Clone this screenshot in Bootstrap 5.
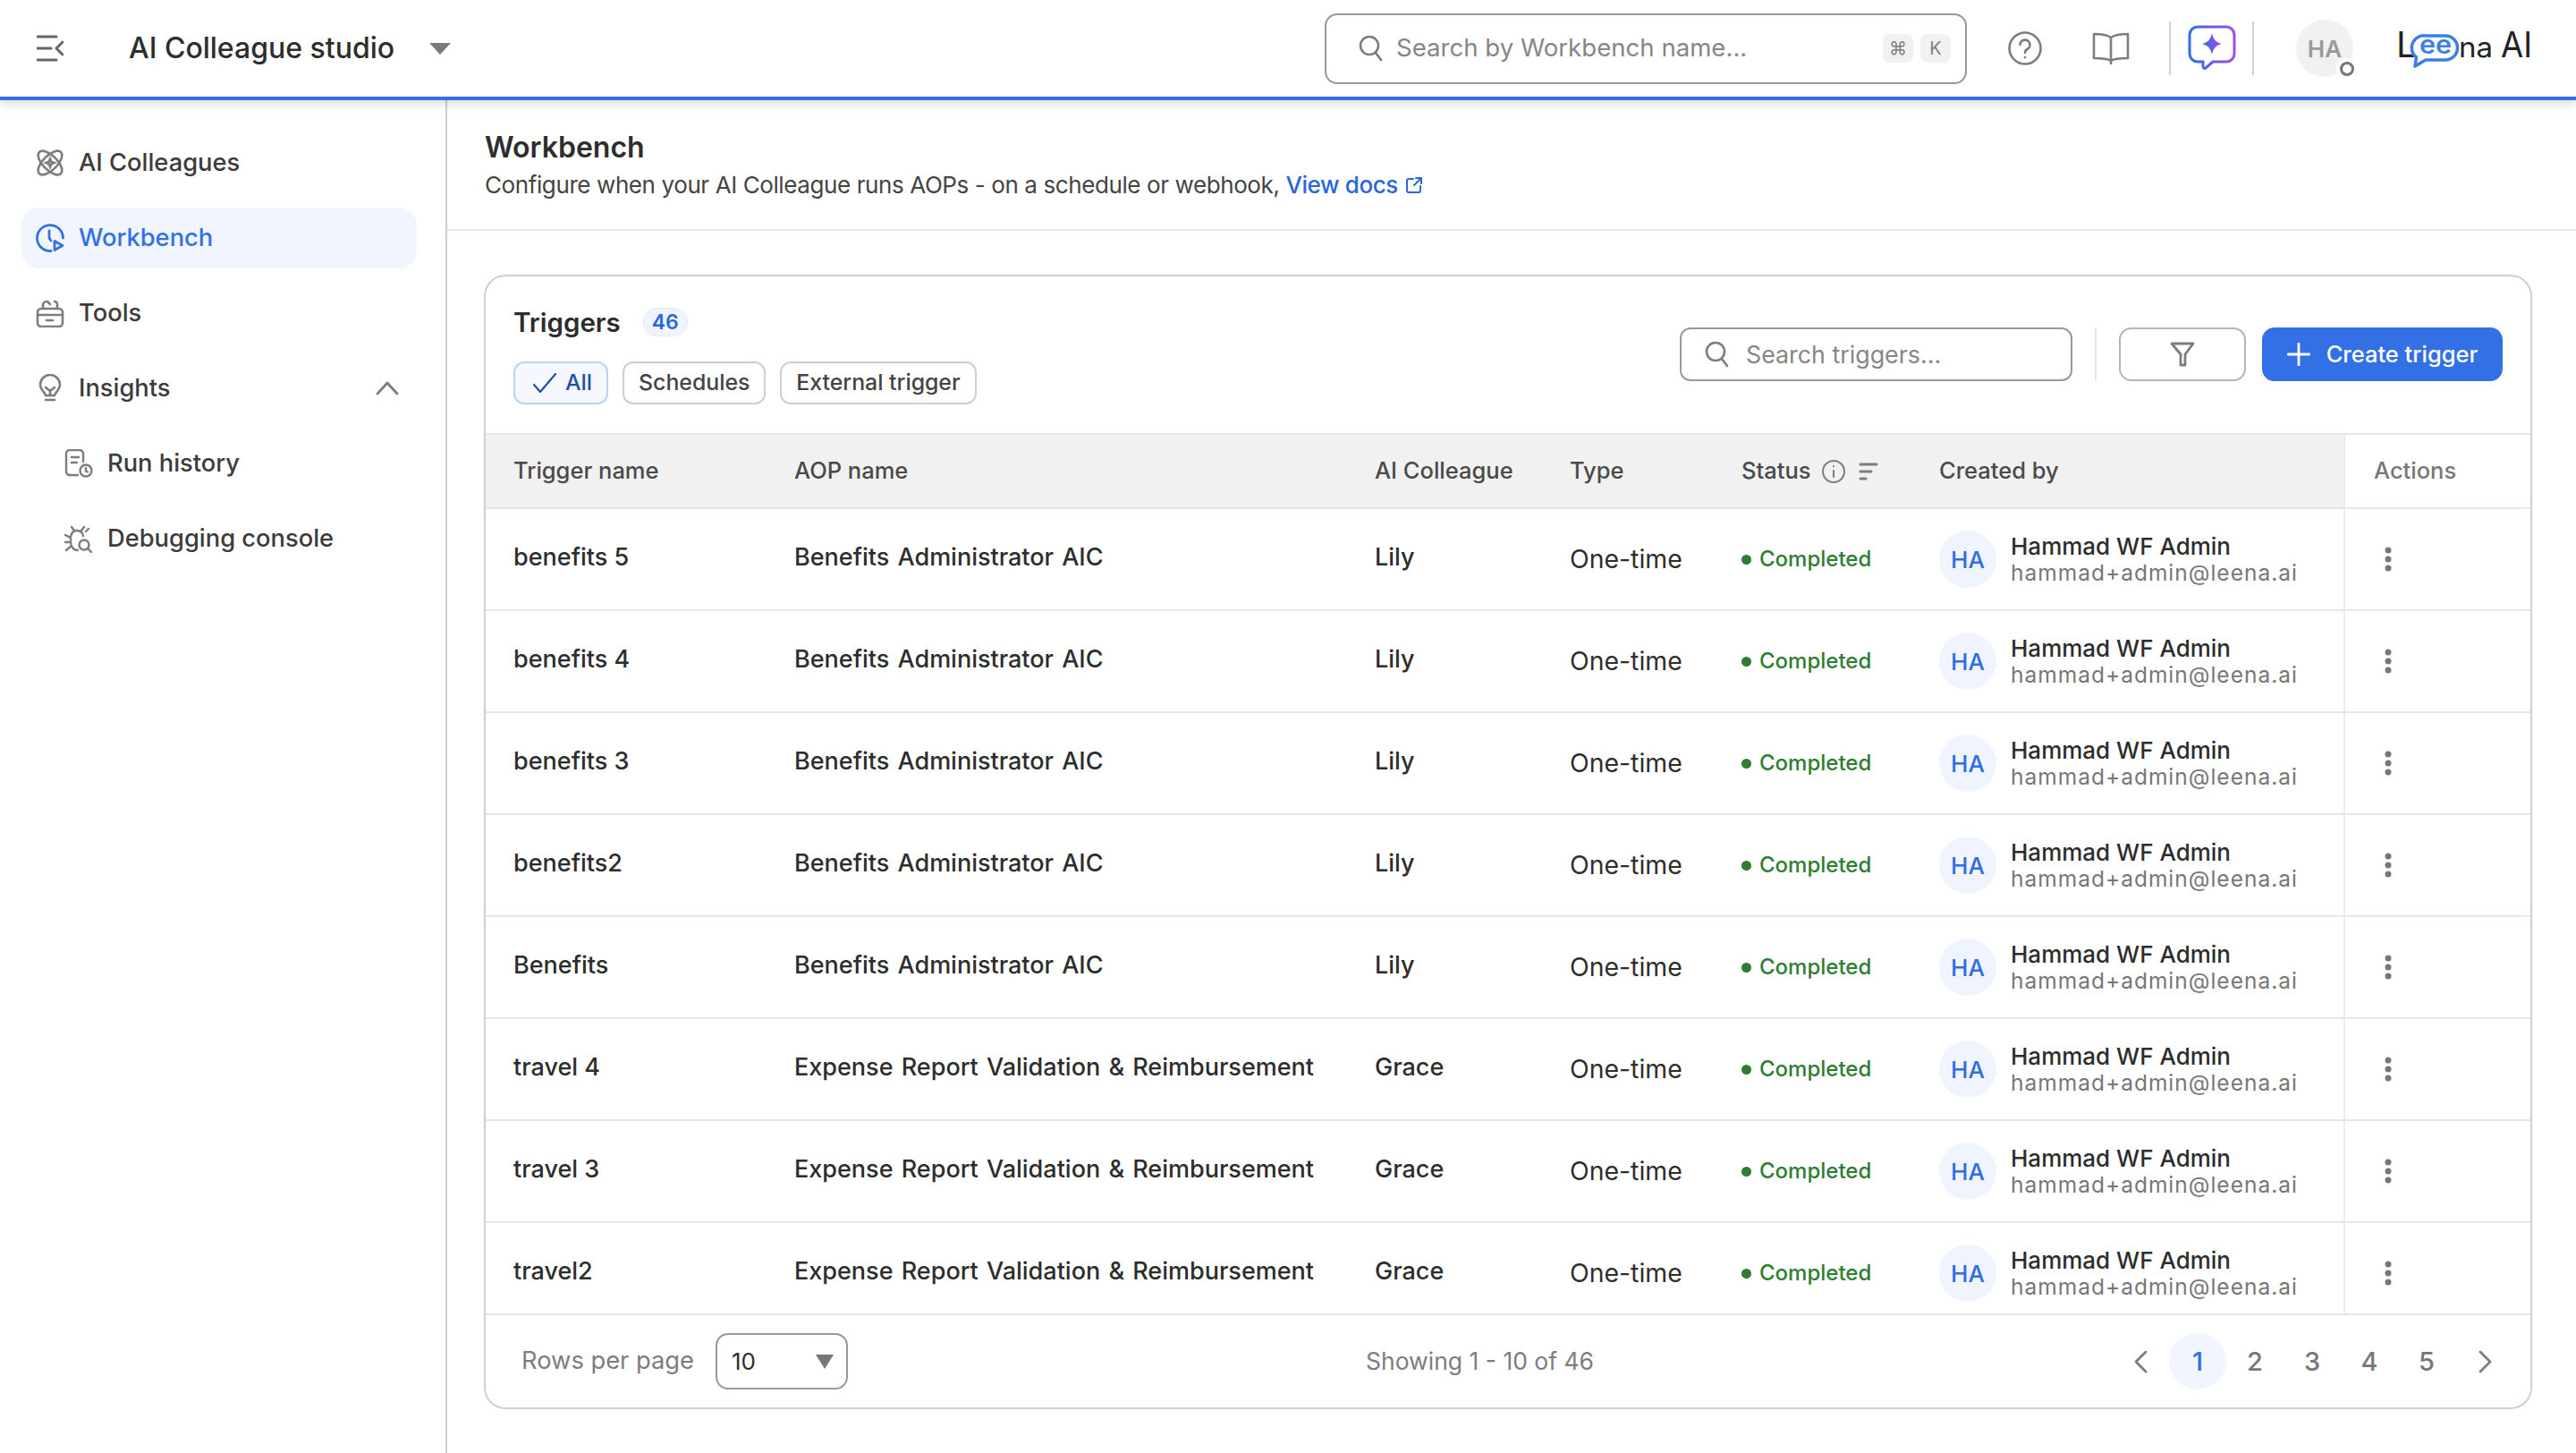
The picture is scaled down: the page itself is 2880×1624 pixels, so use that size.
<!DOCTYPE html>
<html>
<head>
    <title>AI Colleague studio - Workbench</title>
    <link rel="stylesheet" href="https://cdn.jsdelivr.net/npm/bootstrap@5.3.0/dist/css/bootstrap.min.css">
    <style>
        body { width: 2880px; height: 1624px; overflow: hidden; font-family: "Inter", "Noto Sans", sans-serif; color: #2d2d2d; background: #fff; }
        svg { display: block; flex: none; }
        .top-bar { height: 112px; border-bottom: 4px solid #3370e6; box-shadow: 0 4px 10px rgba(0,0,0,.14); position: relative; z-index: 2; padding-left: 41px; }
        .app-name { font-size: 32px; font-weight: 500; margin-left: 73px; width: 336px; white-space: nowrap; }
        .caret-down { width: 0; height: 0; border-left: 12px solid transparent; border-right: 12px solid transparent; border-top: 13px solid #7a7a7a; }
        .search-top { width: 718px; height: 79px; margin-left: 977px; border: 2px solid #999; border-radius: 14px; padding: 0 16px 0 36px; }
        .search-top input, .search-box input { border: 0; padding: 0; box-shadow: none !important; color: #2d2d2d; background: transparent; }
        .search-top input { font-size: 27.6px; margin-left: 14px; }
        input::placeholder { color: #868686 !important; opacity: 1; }
        .key-chip { width: 34px; height: 32px; border-radius: 8px; background: #f1f1f1; color: #808080; font-size: 20px; }
        .top-div { width: 2px; height: 60px; background: #cfcfcf; }
        .user-avatar { width: 64px; height: 64px; background: #f1f1f1; color: #9a9a9a; font-size: 26px; font-weight: 600; }
        .user-status { right: -5px; bottom: -3px; width: 24px; height: 24px; background: #fff; }
        .user-status i { width: 16px; height: 16px; border: 3px solid #777; border-radius: 50%; display: block; }
        .page-body { height: 1512px; }
        .side-nav { width: 500px; border-right: 2px solid #cfcfcf; padding: 36px 32px 0 24px; }
        .side-nav .nav-link { height: 68px; margin-bottom: 16px; padding: 0 0 0 16px; border-radius: 20px; color: #3c3c3c; font-size: 27.3px; font-weight: 500; gap: 16px; }
        .side-nav .nav-link.on { background: #f0f5fe; color: #3370e6; }
        .side-nav .nav-link.sub { padding-left: 48px; color: #3c3c3c; }
        .main-area { flex: 1; min-width: 0; }
        .page-head { height: 146px; padding: 33px 0 0 42px; border-bottom: 2px solid #e6e6e6; }
        .page-head h1 { font-size: 32px; font-weight: 600; line-height: 40px; margin: 0 0 3px; }
        .page-head p { font-size: 26px; letter-spacing: -.4px; line-height: 38px; margin: 0; color: #444; }
        .page-head a { color: #2a67dc; text-decoration: none; font-weight: 500; }
        .trg-card { margin: 49px 0 0 41px; width: 2290px; height: 1268px; border: 2px solid #cfcfcf; border-radius: 24px; overflow: hidden; }
        .trg-head { height: 175px; padding: 35px 31px 0 31px; }
        .trg-title { font-size: 29.5px; font-weight: 600; line-height: 32px; }
        .count-pill { width: 50px; height: 32px; margin-left: 25px; background: #eff4fe; border: 1px solid #dde8fc; border-radius: 16px; color: #2a67dc; font-size: 23px; font-weight: 600; }
        .chip { height: 48px; border: 2px solid #cfcfcf; border-radius: 12px; background: #fff; font-size: 24.8px; font-weight: 500; color: #444; padding: 0 16px; gap: 10px; }
        .chip.on { background: #f5f9ff; border-color: #b7d3fa; color: #2250ac; padding: 0 16px 0 20px; }
        .search-box { width: 439px; height: 60px; border: 2px solid #999; border-radius: 12px; padding: 0 24px 0 26px; }
        .search-box input { font-size: 26.8px; margin-left: 18px; }
        .sep-line { width: 2px; height: 60px; background: #e6e6e6; margin: 0 25px; }
        .filter-btn { width: 142px; height: 60px; border: 2px solid #b5b5b5; border-radius: 14px; background: #fff; padding: 0; }
        .make-btn { width: 269px; height: 60px; margin-left: 18px; background: #3370e6; border: 0; border-radius: 14px; color: #fff; font-size: 25.5px; font-weight: 500; gap: 18px; padding: 0; }
        .make-btn:hover { background: #3370e6; color: #fff; }
        .table-clip { height: 986px; overflow: hidden; border-top: 2px solid #e6e6e6; border-bottom: 2px solid #e6e6e6; }
        .trg-table { table-layout: fixed; width: 2286px; margin: 0; }
        .trg-table th, .trg-table td { padding: 0 0 0 31px; vertical-align: middle; border-bottom: 2px solid #e6e6e6; white-space: nowrap; color: #2d2d2d; }
        .trg-table th { height: 82px; background: #f1f1f1; font-size: 25.5px; font-weight: 500; color: #4a4a4a; }
        .trg-table td { height: 114px; font-size: 27px; font-weight: 500; }
        .trg-table .main-cell { padding-bottom: 3px; }
        .trg-table .aop-cell { word-spacing: 2px; }
        .trg-table .act-cell { border-left: 2px solid #ececec; background: #fff; padding-left: 32px; }
        .trg-table th.act-cell { color: #777; }
        .trg-table .type-cell { font-size: 28.4px; font-weight: 400; }
        .done-tag { color: #2e7d32; font-size: 24px; font-weight: 500; gap: 9px; }
        .done-tag i { width: 11px; height: 11px; background: #2e7d32; border-radius: 50%; display: block; }
        .person-dot { width: 64px; height: 64px; background: #eff4fe; color: #2f6de4; font-size: 26px; font-weight: 500; }
        .person-name { font-size: 26px; line-height: 30px; font-weight: 500; }
        .person-mail { font-size: 24.5px; letter-spacing: 1px; line-height: 28px; font-weight: 400; color: #777; }
        .trg-foot { height: 103px; padding: 0 20px 0 40px; }
        .foot-label { color: #7d7d7d; font-size: 27.3px; }
        .foot-count { color: #7d7d7d; font-size: 26.5px; }
        .page-size { width: 148px; height: 63px; margin-left: 24px; border: 2px solid #999; border-radius: 14px; font-size: 26px; padding: 0 16px; color: #2d2d2d;
            background-image: url("data:image/svg+xml,%3Csvg xmlns='http://www.w3.org/2000/svg' width='20' height='16'%3E%3Cpath d='M0 0h20L10 16z' fill='%23777'/%3E%3C/svg%3E"); background-size: 20px 16px; background-position: right 14px center; }
        .pager .page-link { width: 64px; height: 63px; border: 0; padding: 0; background: transparent; color: #777; font-size: 29px; font-weight: 500; display: flex; align-items: center; justify-content: center; border-radius: 50% !important; margin: 0 !important; }
        .pager .page-item.active .page-link { background: #f0f5fe; color: #2f6de4; }
    </style>
</head>
<body>
    <header class="top-bar d-flex align-items-center">
        <svg width="30" height="30" viewBox="0 0 30 30" fill="none" stroke="#666" stroke-width="3" stroke-linecap="round" stroke-linejoin="round"><path d="M1 2h21M1 15h15M1 28h21M29 8l-7 7 7 7"/></svg>
        <div class="app-name">AI Colleague studio</div>
        <div class="caret-down"></div>
        <div class="search-top d-flex align-items-center">
            <svg width="28" height="30" viewBox="0 0 28 30" fill="none" stroke="#7d7d7d" stroke-width="2.6" stroke-linecap="round"><circle cx="12" cy="12" r="10"/><path d="M19 20l6 8"/></svg>
            <input class="form-control" type="text" placeholder="Search by Workbench name...">
            <span class="key-chip d-flex align-items-center justify-content-center me-2 flex-shrink-0">⌘</span>
            <span class="key-chip d-flex align-items-center justify-content-center flex-shrink-0">K</span>
        </div>
        <svg style="margin-left:46px" width="38" height="38" viewBox="0 0 38 38" fill="none" stroke="#7d7d7d" stroke-width="2.6" stroke-linecap="round"><circle cx="19" cy="19" r="17.5"/><path d="M13.5 15a5.5 5.5 0 1 1 8 5c-1.800 1-2.500 2-2.500 4"/><path d="M19 29v.2"/></svg>
        <svg style="margin-left:56px" width="42" height="38" viewBox="0 0 42 38" fill="none" stroke="#7d7d7d" stroke-width="2.6" stroke-linejoin="round"><path d="M21 7c-4-3-12-4-19-4v27c7 0 15 0 19 3 4-3 12-3 19-3V3c-7 0-15 1-19 4zM21 7v30"/></svg>
        <div class="top-div" style="margin-left:44px"></div>
        <svg style="margin-left:19px" width="54" height="52" viewBox="0 0 54 52" fill="none">
            <defs><linearGradient id="sparkGrad" x1="0" y1="0" x2="1" y2="0"><stop offset="0" stop-color="#2f6de4"/><stop offset="1" stop-color="#a24be8"/></linearGradient></defs>
            <path d="M11 2h32a9 9 0 0 1 9 9v21a9 9 0 0 1-9 9H28l-8 7c-1.500 1-3 0-3-2v-5h-6a9 9 0 0 1-9-9V11a9 9 0 0 1 9-9z" stroke="url(#sparkGrad)" stroke-width="3"/>
            <path d="M27 9c1.500 7 4 10 11 12-7 2-9.500 5-11 12-1.500-7-4-10-11-12 7-2 9.500-5 11-12z" fill="url(#sparkGrad)"/>
        </svg>
        <div class="top-div" style="margin-left:18px"></div>
        <div class="position-relative" style="margin-left:47px">
            <div class="user-avatar rounded-circle d-flex align-items-center justify-content-center">HA</div>
            <span class="user-status position-absolute rounded-circle d-flex align-items-center justify-content-center"><i></i></span>
        </div>
        <svg style="margin-left:48px;overflow:visible" width="154" height="46" viewBox="0 0 154 46" fill="none" font-family="Inter, sans-serif">
            <text x="0" y="33" fill="#222" font-size="40" font-weight="400">L</text>
            <path d="M33 9h22a13.500 13.500 0 0 1 0 27H33l-12 7 1.500-10a13.500 13.500 0 0 1 10.500-24z" fill="#fff" stroke="#3c7de8" stroke-width="3.500" stroke-linejoin="round"/>
            <text x="26" y="29" fill="#3c7de8" font-size="28" font-weight="600" textLength="36" lengthAdjust="spacingAndGlyphs">ee</text>
            <text x="70" y="33" fill="#222" font-size="31" font-weight="400" textLength="38" lengthAdjust="spacingAndGlyphs">na</text>
            <text x="117" y="33" fill="#222" font-size="40" font-weight="400" textLength="35" lengthAdjust="spacingAndGlyphs">AI</text>
        </svg>
    </header>

    <div class="page-body d-flex">
        <nav class="side-nav nav flex-column flex-nowrap">
            <a class="nav-link d-flex align-items-center" href="#">
                <svg width="32" height="32" viewBox="0 0 32 32" fill="none" stroke="#7d7d7d" stroke-width="2.600"><g transform="rotate(45 16 16)"><ellipse cx="16" cy="16" rx="17" ry="8"/><ellipse cx="16" cy="16" rx="8" ry="17"/></g><path d="M16 11.500l1.300 3.200 3.200 1.300-3.200 1.300-1.300 3.200-1.300-3.200-3.200-1.300 3.200-1.300z"/></svg>
                AI Colleagues
            </a>
            <a class="nav-link on d-flex align-items-center" href="#">
                <svg width="32" height="32" viewBox="0 0 32 32" fill="none" stroke="#3370e6" stroke-width="2.800" stroke-linecap="round" stroke-linejoin="round"><path d="M17 30.500A14.500 14.500 0 1 1 30.500 16"/><path d="M15 8v8l2 3"/><path d="M21 19.500l9 5-9 5z"/></svg>
                Workbench
            </a>
            <a class="nav-link d-flex align-items-center" href="#">
                <svg width="32" height="32" viewBox="0 0 32 32" fill="none" stroke="#7d7d7d" stroke-width="2.600" stroke-linecap="round" stroke-linejoin="round"><rect x="2" y="11" width="28" height="20" rx="4"/><path d="M2 18h28M12 24h7M8 11V7a4 4 0 0 1 4-4h1l3 3M24 11V6a3 3 0 0 0-3-3"/></svg>
                Tools
            </a>
            <a class="nav-link d-flex align-items-center" href="#">
                <svg width="32" height="32" viewBox="0 0 32 32" fill="none" stroke="#7d7d7d" stroke-width="2.600" stroke-linecap="round" stroke-linejoin="round"><path d="M11 24c0-3-6-6-6-12a11 11 0 0 1 22 0c0 6-6 9-6 12z"/><path d="M11 15l5 4 5-4M16 19v5M11 29h10"/></svg>
                Insights
                <svg class="ms-auto" style="margin-right:20px" width="26" height="16" viewBox="0 0 26 16" fill="none" stroke="#7d7d7d" stroke-width="2.800" stroke-linecap="round" stroke-linejoin="round"><path d="M2 14L13 2l11 12"/></svg>
            </a>
            <a class="nav-link sub d-flex align-items-center" href="#">
                <svg width="32" height="32" viewBox="0 0 32 32" fill="none" stroke="#7d7d7d" stroke-width="2.400" stroke-linecap="round"><path d="M15 29H6a4 4 0 0 1-4-4V5a4 4 0 0 1 4-4h11a4 4 0 0 1 4 4v9"/><path d="M8 9h8M8 15h6"/><circle cx="24" cy="24" r="6.500"/><path d="M24 21v3.500l2 1"/></svg>
                Run history
            </a>
            <a class="nav-link sub d-flex align-items-center" href="#">
                <svg width="32" height="32" viewBox="0 0 32 32" fill="none" stroke="#7d7d7d" stroke-width="2.400" stroke-linecap="round"><path d="M15 29c-5 0-8-4-8-10v-4c0-5 3-8 7-8s7 3 7 6M8 3l3 4M22 3l-3 4M1 12l6 3M1 20h6M2 29l6-5M24 8l3-3"/><circle cx="22" cy="23" r="5.500"/><path d="M26 27l4 4"/></svg>
                Debugging console
            </a>
        </nav>

        <main class="main-area">
            <div class="page-head">
                <h1>Workbench</h1>
                <p class="d-flex align-items-center">Configure when your AI Colleague runs AOPs - on a schedule or webhook,&nbsp;<a href="#">View docs</a>
                    <svg class="ms-2" width="20" height="20" viewBox="0 0 20 20" fill="none" stroke="#2a67dc" stroke-width="2" stroke-linecap="round" stroke-linejoin="round"><path d="M9 3H4a2 2 0 0 0-2 2v11a2 2 0 0 0 2 2h11a2 2 0 0 0 2-2v-5M10 10l8-8M12 2h6v6"/></svg>
                </p>
            </div>

            <div class="card trg-card">
                <div class="trg-head d-flex justify-content-between align-items-center">
                    <div class="align-self-start">
                        <div class="d-flex align-items-center" style="margin-bottom:28px">
                            <span class="trg-title">Triggers</span>
                            <span class="count-pill d-flex align-items-center justify-content-center">46</span>
                        </div>
                        <div class="d-flex gap-3">
                            <button class="chip on d-flex align-items-center" type="button">
                                <svg width="26" height="22" viewBox="0 0 26 22" fill="none" stroke="#2250ac" stroke-width="2.200" stroke-linecap="round" stroke-linejoin="round"><path d="M1 13l7 8L25 1"/></svg>
                                All
                            </button>
                            <button class="chip d-flex align-items-center" type="button">Schedules</button>
                            <button class="chip d-flex align-items-center" type="button">External trigger</button>
                        </div>
                    </div>
                    <div class="d-flex align-items-center align-self-start" style="margin-top:22px">
                        <div class="search-box d-flex align-items-center">
                            <svg width="28" height="30" viewBox="0 0 28 30" fill="none" stroke="#7d7d7d" stroke-width="2.600" stroke-linecap="round"><circle cx="12" cy="12" r="10"/><path d="M19 20l6 8"/></svg>
                            <input class="form-control" type="text" placeholder="Search triggers...">
                        </div>
                        <div class="sep-line"></div>
                        <button class="btn filter-btn d-flex align-items-center justify-content-center" type="button">
                            <svg width="28" height="28" viewBox="0 0 28 28" fill="none" stroke="#7d7d7d" stroke-width="2.800" stroke-linejoin="round"><path d="M2 2h24l-9 12v12h-5V14z"/></svg>
                        </button>
                        <button class="btn make-btn d-flex align-items-center justify-content-center" type="button">
                            <svg width="26" height="26" viewBox="0 0 26 26" fill="none" stroke="#fff" stroke-width="2.800" stroke-linecap="round"><path d="M13 1v24M1 13h24"/></svg>
                            Create trigger
                        </button>
                    </div>
                </div>

                <div class="table-clip">
                    <table class="table trg-table">
                        <colgroup><col style="width:314px"><col style="width:649px"><col style="width:218px"><col style="width:192px"><col style="width:221px"><col style="width:484px"><col style="width:208px"></colgroup>
                        <thead>
                            <tr>
                                <th>Trigger name</th><th>AOP name</th><th>AI Colleague</th><th>Type</th>
                                <th><div class="d-flex align-items-center">Status
                                    <svg style="margin-left:12px" width="26" height="26" viewBox="0 0 26 26" fill="none" stroke="#7d7d7d" stroke-width="2" stroke-linecap="round"><circle cx="13" cy="13" r="12"/><path d="M13 12v7M13 7v.2"/></svg>
                                    <svg style="margin-left:15px" width="22" height="20" viewBox="0 0 22 20" fill="none" stroke="#7d7d7d" stroke-width="3" stroke-linecap="round"><path d="M2 2h18M2 10h12M2 18h6"/></svg>
                                </div></th>
                                <th>Created by</th><th class="act-cell">Actions</th>
                            </tr>
                        </thead>
                        <tbody id="triggerRows"></tbody>
                    </table>
                </div>

                <div class="trg-foot d-flex align-items-center justify-content-between">
                    <div class="d-flex align-items-center">
                        <span class="foot-label">Rows per page</span>
                        <select class="form-select page-size"><option>10</option><option>25</option><option>50</option></select>
                    </div>
                    <span class="foot-count">Showing 1 - 10 of 46</span>
                    <ul class="pagination pager mb-0">
                        <li class="page-item"><a class="page-link" href="#"><svg width="16" height="26" viewBox="0 0 16 26" fill="none" stroke="#7d7d7d" stroke-width="2.800" stroke-linecap="round" stroke-linejoin="round"><path d="M14 2L3 13l11 11"/></svg></a></li>
                        <li class="page-item active"><a class="page-link" href="#">1</a></li>
                        <li class="page-item"><a class="page-link" href="#">2</a></li>
                        <li class="page-item"><a class="page-link" href="#">3</a></li>
                        <li class="page-item"><a class="page-link" href="#">4</a></li>
                        <li class="page-item"><a class="page-link" href="#">5</a></li>
                        <li class="page-item"><a class="page-link" href="#"><svg class="ms-1" width="16" height="26" viewBox="0 0 16 26" fill="none" stroke="#7d7d7d" stroke-width="2.800" stroke-linecap="round" stroke-linejoin="round"><path d="M2 2l11 11L2 24"/></svg></a></li>
                    </ul>
                </div>
            </div>
        </main>
    </div>

    <script src="https://cdn.jsdelivr.net/npm/bootstrap@5.3.0/dist/js/bootstrap.bundle.min.js"></script>
    <script>
        const benefitsAop = 'Benefits Administrator AIC';
        const expenseAop = 'Expense Report Validation &amp; Reimbursement';
        const triggers = [
            ['benefits 5', benefitsAop, 'Lily'],
            ['benefits 4', benefitsAop, 'Lily'],
            ['benefits 3', benefitsAop, 'Lily'],
            ['benefits2', benefitsAop, 'Lily'],
            ['Benefits', benefitsAop, 'Lily'],
            ['travel 4', expenseAop, 'Grace'],
            ['travel 3', expenseAop, 'Grace'],
            ['travel2', expenseAop, 'Grace']
        ];

        document.getElementById('triggerRows').innerHTML = triggers.map(t => `
            <tr>
                <td class="main-cell">${t[0]}</td>
                <td class="main-cell aop-cell">${t[1]}</td>
                <td class="main-cell">${t[2]}</td>
                <td class="type-cell">One-time</td>
                <td><div class="done-tag d-flex align-items-center"><i></i>Completed</div></td>
                <td>
                    <div class="d-flex align-items-center gap-3">
                        <div class="person-dot rounded-circle d-flex align-items-center justify-content-center">HA</div>
                        <div>
                            <div class="person-name">Hammad WF Admin</div>
                            <div class="person-mail">hammad+admin@leena.ai</div>
                        </div>
                    </div>
                </td>
                <td class="act-cell">
                    <svg style="margin-left:11px" width="10" height="28" viewBox="0 0 10 28" fill="#777"><circle cx="5" cy="4" r="3.500"/><circle cx="5" cy="14" r="3.500"/><circle cx="5" cy="24" r="3.500"/></svg>
                </td>
            </tr>`).join('');
    </script>
</body>
</html>
